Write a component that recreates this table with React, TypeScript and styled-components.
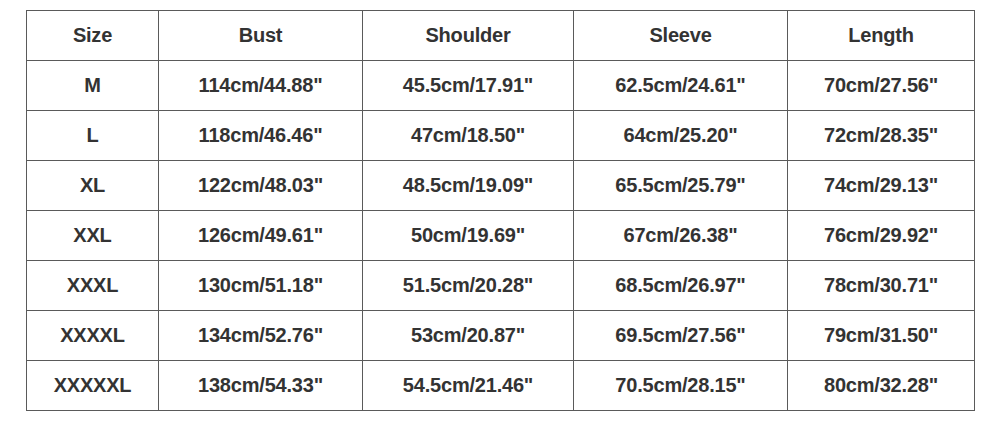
import React from "react";
import styled, { createGlobalStyle } from "styled-components";

const GlobalStyle = createGlobalStyle`
  html, body {
    margin: 0;
    padding: 0;
    background: #fff;
  }
  body {
    font-family: "Liberation Sans", Arial, sans-serif;
  }
`;

const Page = styled.div`
  width: 1000px;
  height: 421px;
  padding: 10px 0 0 26px;
  box-sizing: border-box;
`;

const Table = styled.table`
  border-collapse: collapse;
  table-layout: fixed;
  width: 948px;
`;

const Col = styled.col<{ w: number }>`
  width: ${(p) => p.w}px;
`;

const Row = styled.tr`
  height: 50px;
`;

const Cell = styled.td`
  padding: 0 0 1px;
  border: 1.5px solid #5a5a5a;
  text-align: center;
  vertical-align: middle;
  font-size: 20px;
  letter-spacing: -0.2px;
  font-weight: bold;
  color: #333;
  white-space: nowrap;
`;

const HeadCell = styled(Cell).attrs({ as: "th" })``;

const headers = ["Size", "Bust", "Shoulder", "Sleeve", "Length"];
const widths = [132, 204, 211, 214, 187];

const rows = [
  ["M", '114cm/44.88"', '45.5cm/17.91"', '62.5cm/24.61"', '70cm/27.56"'],
  ["L", '118cm/46.46"', '47cm/18.50"', '64cm/25.20"', '72cm/28.35"'],
  ["XL", '122cm/48.03"', '48.5cm/19.09"', '65.5cm/25.79"', '74cm/29.13"'],
  ["XXL", '126cm/49.61"', '50cm/19.69"', '67cm/26.38"', '76cm/29.92"'],
  ["XXXL", '130cm/51.18"', '51.5cm/20.28"', '68.5cm/26.97"', '78cm/30.71"'],
  ["XXXXL", '134cm/52.76"', '53cm/20.87"', '69.5cm/27.56"', '79cm/31.50"'],
  ["XXXXXL", '138cm/54.33"', '54.5cm/21.46"', '70.5cm/28.15"', '80cm/32.28"'],
];

const App = () => {
  return (
    <Page>
      <GlobalStyle />
      <Table>
        <colgroup>
          {widths.map((w, i) => (
            <Col key={i} w={w} />
          ))}
        </colgroup>
        <thead>
          <Row>
            {headers.map((h) => (
              <HeadCell key={h}>{h}</HeadCell>
            ))}
          </Row>
        </thead>
        <tbody>
          {rows.map((row, i) => (
            <Row key={i}>
              {row.map((v, j) => (
                <Cell key={j}>{v}</Cell>
              ))}
            </Row>
          ))}
        </tbody>
      </Table>
    </Page>
  );
};

export default App;
